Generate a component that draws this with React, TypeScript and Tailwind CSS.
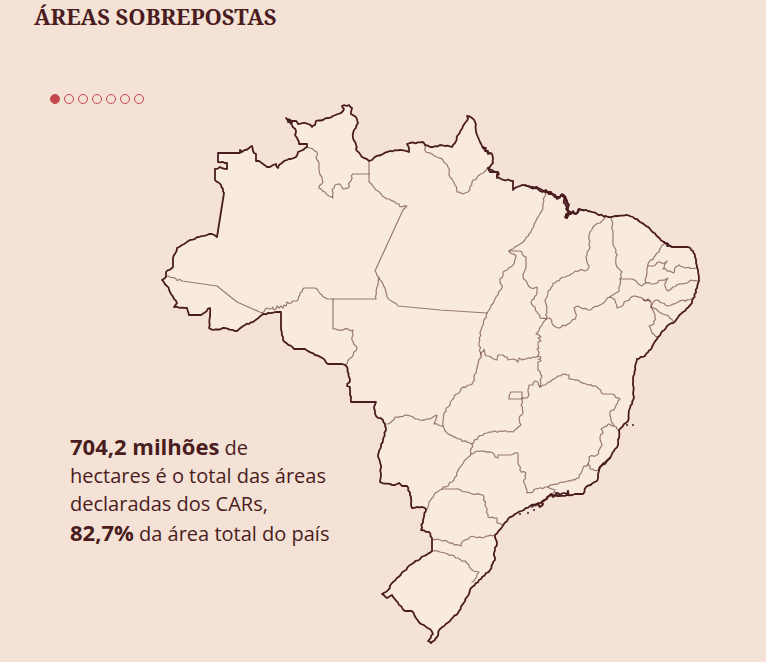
import { useState } from "react";

type Point = [number, number];

const OUTLINE =
  "218,153 240,153 240,150 242,152 245,150 249,148 252,146 253,151 256,154 256,161 259,161 263,164 267,167 270,167 273,165 276,164 278,168 279,165 282,163 287,160 291,159 296,157 298,152 303,150 307,147 307,144 299,144 298,140 295,135 296,131 292,125 287,119 292,121 296,121 298,124 303,123 308,124 312,127 315,125 316,121 323,120 328,118 333,116 338,114 343,111 344,109 342,106 349,105 352,108 351,114 356,117 358,123 354,130 353,138 356,145 357,151 362,157 369,161 372,160 375,157 383,154 390,151 400,150 409,152 409,148 407,144 410,143 423,142 425,145 433,147 440,145 445,146 452,147 455,143 458,135 463,126 468,119 467,116 472,118 475,122 476,132 480,142 483,148 487,152 492,154 493,163 488,168 490,172 498,172 497,177 501,179 513,181 513,190 517,187 522,185 533,187 545,191 553,194 557,198 562,195 567,201 568,207 569,212 566,218 570,212 575,214 579,209 588,211 597,214 608,217 618,216 627,215 633,217 640,222 650,229 658,237 665,243 673,247 681,247 688,247 693,251 695,257 696,263 698,270 699,277 698,283 697,288 692,303 683,312 673,323 667,326 658,337 652,347 645,356 637,359 635,367 633,383 634,397 630,408 628,421 624,424 619,430 618,445 610,458 600,467 598,474 597,481 586,487 583,494 575,494 567,495 558,496 550,495 545,500 540,503 530,506 517,513 508,519 502,527 495,535 497,543 494,553 495,560 490,570 481,579 471,588 467,597 459,611 450,621 440,629 437,637 431,643 428,641 433,634 430,629 421,624 416,618 412,611 405,611 399,605 392,595 387,598 382,594 388,590 393,582 404,571 412,564 424,556 432,551 432,538 429,532 421,530 423,520 426,509 422,507 412,508 411,497 407,486 402,486 399,483 395,485 380,482 381,468 378,455 383,440 386,428 383,420 376,416 374,408 376,402 351,402 350,387 347,386 350,380 347,367 342,364 328,364 324,359 315,355 305,349 294,349 283,340 281,327 281,312 268,313 262,315 253,322 245,325 237,331 225,328 213,330 209,328 210,308 201,315 189,315 187,308 174,307 177,303 170,292 167,286 162,280 166,277 166,272 173,267 173,258 177,248 182,245 190,240 199,237 207,235 212,234 217,237 224,193 221,185 215,180 215,169 220,167 227,169 227,163 218,162";

const STATE_BORDERS = [
  "307,147 310,148 317,152 316,157 319,163 319,170 322,177 323,182 319,188 325,192 329,196 333,198 332,190 335,185 340,184 343,189 348,188 350,182 353,174 369,174",
  "369,161 369,182 372,185 375,189 381,194 387,199 395,202 402,207 407,206 403,210 375,271 379,278 377,287 376,299 333,299 327,299 322,295 315,288 304,288 300,293 297,301 293,301 291,303 287,302 286,306 284,305 283,308 281,306 279,308 277,306 275,310 273,307 270,309 267,308 262,313",
  "379,278 383,284 387,297 398,306 440,310 487,313",
  "166,276 182,281 217,286 237,302 262,313",
  "333,299 333,312 333,329 353,330 352,340 357,348 352,357 345,365",
  "425,145 426,152 432,154 443,160 448,167 449,175 455,185 457,192 463,194 468,192 472,182 478,176 483,173 488,168",
  "545,192 543,208 538,217 533,228 525,240 509,251 516,256 513,265 503,272 500,282 502,288 495,299 487,313 481,330 479,343 481,355 477,368 473,382 470,385 461,389 452,400 444,413 443,426 447,433 458,439 472,444 471,454 462,465 452,482 442,489 435,493 429,502 427,509",
  "509,251 520,251 526,257 526,268 523,277 531,288 537,287 537,293 531,302 537,312 540,318 546,319",
  "605,217 600,223 593,227 589,237 590,248 586,257 589,266 587,270 575,271 565,277 553,283 545,300 547,308 546,319 550,318 553,325 558,328 570,323 576,317 574,308 578,306 588,310 600,305 610,297 619,291 619,287 620,279 622,272 617,267 616,250 613,245 613,233 611,217",
  "620,279 632,279 642,286 646,283 645,280 647,272 648,264 654,257 659,252 664,244",
  "648,266 653,266 658,262 664,263 667,261 663,269 670,271 674,273 676,267 679,265 683,267 696,268",
  "646,283 653,284 657,283 662,280 668,278 665,286 668,291 673,287 682,284 687,283 691,280 698,281",
  "610,297 615,300 617,308 622,306 624,302 635,296 643,299 651,302 651,307 656,300 662,303 668,306 678,302 692,299",
  "643,299 646,301 648,299 650,301",
  "651,307 658,311 667,315 673,321",
  "651,307 655,317 654,324 649,326 652,333 658,337",
  "481,355 484,349 485,355 497,360 498,355 503,355 505,357 507,357 508,360 513,359 518,362 519,358 522,360 533,357 538,356",
  "546,319 540,327 536,334 541,337 538,338 541,341 538,342 539,348 537,349 539,352 538,356 541,357 538,359 541,361 538,362 538,370 542,376 540,387 545,385 554,379 563,374 569,375 569,379 578,380 588,385 597,387 603,394 612,394 620,399 615,408 610,412 611,420 614,426 619,430",
  "540,387 538,382 535,381 533,385 529,385 528,397 522,398",
  "522,392 511,392 509,399 522,399 522,392",
  "522,399 521,405 523,412 519,418 521,425 513,432 500,431 487,433 478,437 472,444",
  "614,426 608,424 601,429 603,433 600,437 602,445 597,455 589,457 588,464 583,468 579,478 571,481 559,483 548,487 535,489 533,492 527,493 524,483 526,473 521,472 518,463 518,453 510,455 498,455 498,458 495,457 493,453 477,451 471,454",
  "588,464 590,469 599,470",
  "548,487 552,489 555,490 553,493 547,497",
  "386,424 390,423 395,417 405,415 413,417 420,420 430,419 437,415 434,424 443,426",
  "442,489 455,489 470,493 483,495 486,507 488,517 497,518 497,523 503,525",
  "432,539 440,540 448,542 461,546 463,541 470,537 482,538 495,535",
  "432,551 445,553 458,558 467,563 471,569 479,572 475,579 472,582",
];

const BAYS = [
  "525,185 531,188 537,187 540,191 546,190 549,194 555,195 557,199 561,195 564,197 566,203 569,205 566,209 570,212 566,214 567,218 569,214 573,211 576,214 579,209 583,210",
  "545,192 551,192 555,197 560,197 562,194 567,201 564,200 567,209 571,214 565,217",
  "547,497 551,494 553,497 556,493 560,496 564,493 567,494 568,491 569,495",
  "532,507 538,504 540,507 544,500 547,499",
  "483,147 486,148 485,151 488,151 488,154 491,153",
  "488,168 492,170 496,172 499,174 497,178",
  "286,118 290,120 288,122 292,123",
  "664,242 668,244 667,246 672,247",
  "610,458 605,464 602,465 599,470",
];

const ISLANDS: Point[] = [
  [633, 425], [627, 425], [528, 513], [534, 510], [520, 514], [543, 504],
  [568, 491], [557, 495], [539, 506], [567, 216], [578, 210],
];

const parse = (text: string): Point[] =>
  text.split(" ").map((pair) => pair.split(",").map(Number) as Point);

/** Breaks each short span into small steps so that rivers and coasts look irregular. */
function trace(text: string, amplitude: number, closed = false): string {
  const points = parse(text);
  if (closed) points.push(points[0]);
  let d = `M${points[0][0]} ${points[0][1]}`;
  for (let i = 1; i < points.length; i++) {
    const [x0, y0] = points[i - 1];
    const [x1, y1] = points[i];
    const length = Math.hypot(x1 - x0, y1 - y0);
    if (length < 22 && x0 !== x1 && y0 !== y1) {
      const steps = Math.max(1, Math.round(length / 2.4));
      for (let s = 1; s < steps; s++) {
        const t = s / steps;
        const wave = Math.sin((x0 + s * 7) * 12.9898 + (y0 + s) * 78.233) * 43758.5453;
        const shift = (wave - Math.floor(wave) - 0.5) * 2 * amplitude;
        const x = x0 + (x1 - x0) * t - ((y1 - y0) / length) * shift;
        const y = y0 + (y1 - y0) * t + ((x1 - x0) / length) * shift;
        d += `L${x.toFixed(1)} ${y.toFixed(1)}`;
      }
    }
    d += `L${x1} ${y1}`;
  }
  return closed ? d + "Z" : d;
}

function BrazilMap() {
  return (
    <svg
      viewBox="0 104 766 558"
      className="col-start-1 row-start-1 block w-full"
      role="img"
      aria-label="Mapa do Brasil"
      strokeLinejoin="round"
      strokeLinecap="round"
      stroke="#4a1c20"
      fill="none"
    >
      <path d={trace(OUTLINE, 0.7, true)} fill="#f8eadd" stroke="none" />
      <g strokeWidth="1.2" strokeOpacity="0.55">
        {STATE_BORDERS.map((line) => (
          <path key={line} d={trace(line, 1)} />
        ))}
      </g>
      <path d={trace(OUTLINE, 0.7, true)} strokeWidth="1.8" />
      <g strokeWidth="1.8">
        {BAYS.map((line) => (
          <path key={line} d={trace(line, 1.4)} />
        ))}
      </g>
      <g fill="#4a1c20" stroke="none">
        {ISLANDS.map(([x, y]) => (
          <circle key={`${x}-${y}`} cx={x} cy={y} r="1" />
        ))}
      </g>
    </svg>
  );
}

export default function App() {
  const [step, setStep] = useState(0);
  return (
    <main className="min-h-screen bg-[#f4e2d6] text-[#4a1c20]">
      <h1 className="px-[34px] pt-[2px] font-['Noto_Serif','Liberation_Serif',serif] text-[22px] leading-7 font-bold">
        ÁREAS SOBREPOSTAS
      </h1>
      <nav aria-label="Etapas" className="flex h-[74px] items-end gap-1 px-[50px]">
        {[0, 1, 2, 3, 4, 5, 6].map((index) => (
          <button
            key={index}
            type="button"
            aria-label={`Etapa ${index + 1}`}
            aria-current={index === step ? "step" : undefined}
            onClick={() => setStep(index)}
            className={
              index === step
                ? "size-[10px] rounded-full border border-[#c5464d] bg-[#c5464d]"
                : "size-[10px] rounded-full border border-[#c5464d]"
            }
          />
        ))}
      </nav>
      <section className="grid">
        <BrazilMap />
        <p className="z-10 col-start-1 row-start-1 mt-[328px] ml-[70px] w-[270px] self-start font-['Open_Sans','Noto_Sans',sans-serif] text-[20px] leading-7">
          <strong className="text-[22px]">704,2 milhões</strong> de
          <br />
          hectares é o total das áreas declaradas dos CARs,
          <br />
          <strong className="text-[22px] leading-7">82,7%</strong> da área total do país
        </p>
      </section>
    </main>
  );
}
